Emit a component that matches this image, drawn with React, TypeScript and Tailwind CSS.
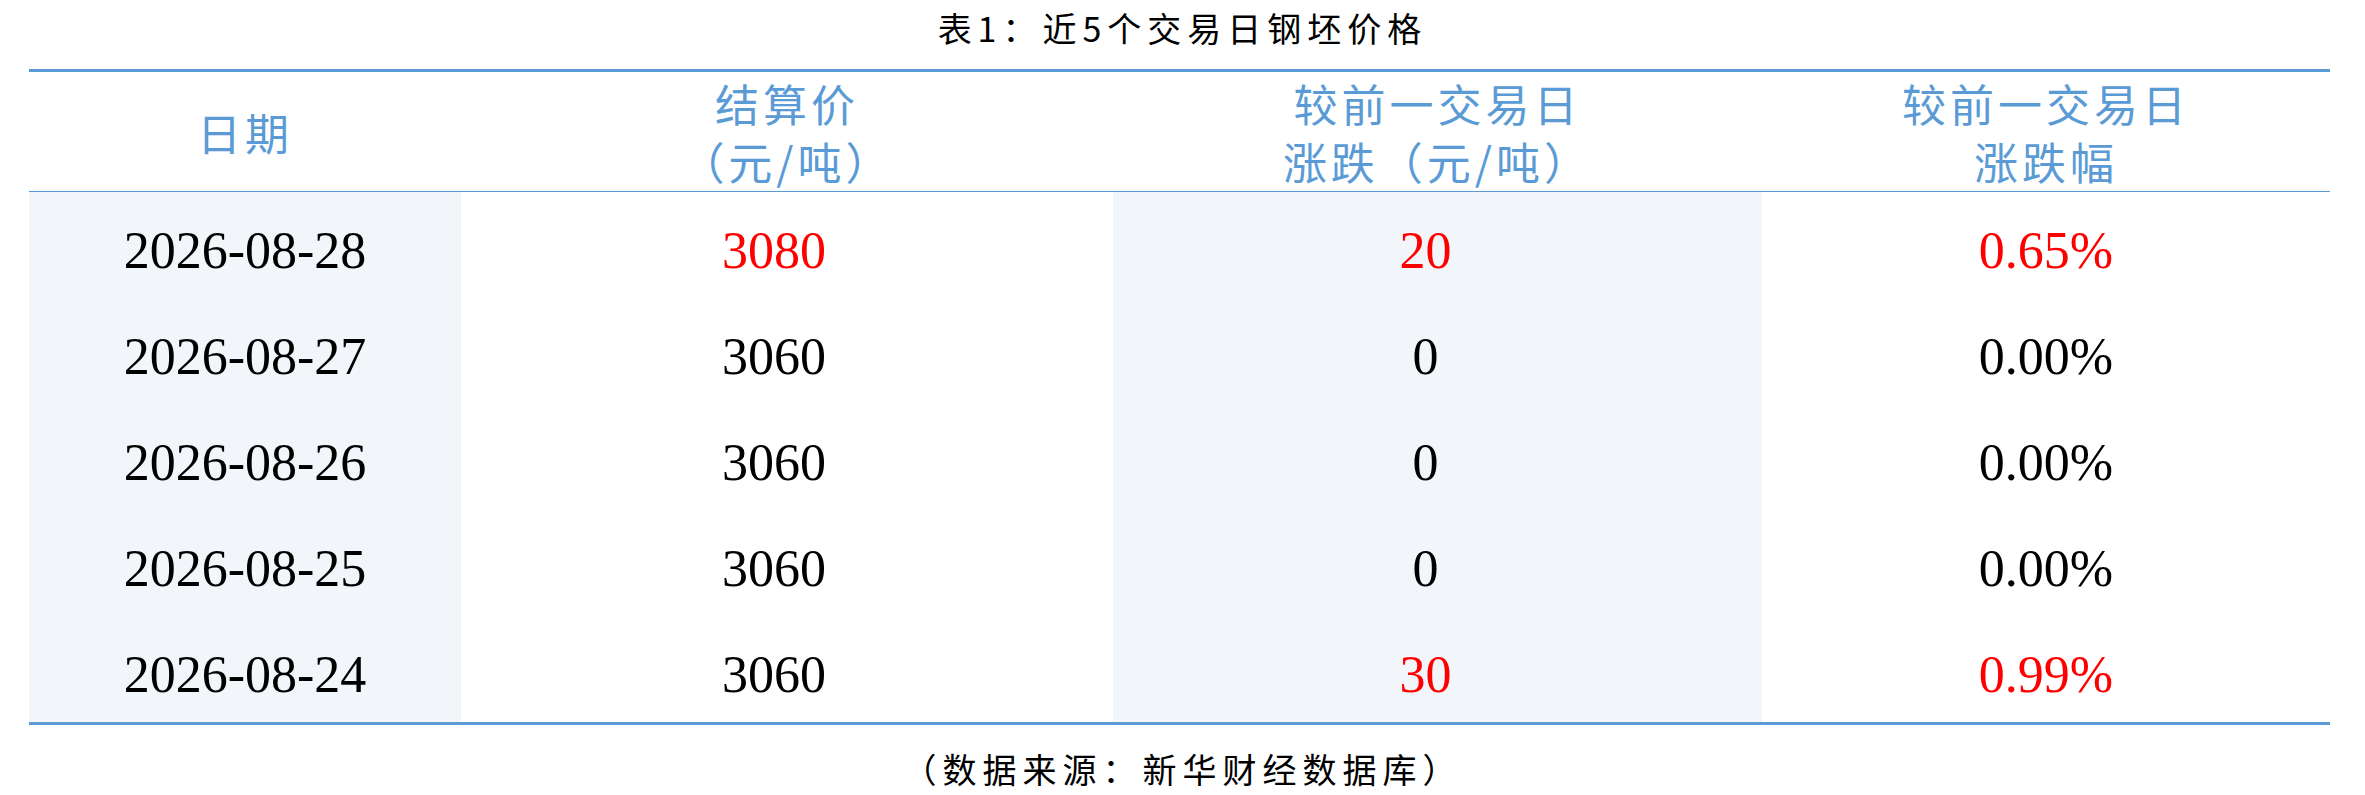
import React from "react";

type Row = {
  date: string;
  price: string;
  change: string;
  pct: string;
  up: boolean;
  priceUp: boolean;
};

const rows: Row[] = [
  { date: "2026-08-28", price: "3080", change: "20", pct: "0.65%", up: true, priceUp: true },
  { date: "2026-08-27", price: "3060", change: "0", pct: "0.00%", up: false, priceUp: false },
  { date: "2026-08-26", price: "3060", change: "0", pct: "0.00%", up: false, priceUp: false },
  { date: "2026-08-25", price: "3060", change: "0", pct: "0.00%", up: false, priceUp: false },
  { date: "2026-08-24", price: "3060", change: "30", pct: "0.99%", up: true, priceUp: false },
];

const cjk = "font-['Noto_Sans_CJK_SC',sans-serif]";
const num = "font-['Liberation_Serif','Noto_Sans_CJK_SC',serif] text-[52px]";
const cols = "grid grid-cols-[432px_652px_649px_568px]";

export default function App() {
  return (
    <div className="w-[2365px] h-[795px] bg-white overflow-hidden">
      <div
        className={`h-[69px] flex justify-center leading-[56px] text-[34px] tracking-[6px] text-black ${cjk}`}
      >
        表1：近5个交易日钢坯价格
      </div>

      <div className="ml-[29px] w-[2301px] border-t-[3px] border-b-[3px] border-[#5b9bd5]">
        {/* header */}
        <div
          className={`${cols} h-[120px] border-b-[1.5px] border-[#5b9bd5] text-[#5b9bd5] text-[44px] leading-[58px] tracking-[4px] ${cjk}`}
        >
          <div className="flex items-center justify-center">日期</div>
          <div className="flex flex-col items-center justify-center">
            <span>结算价</span>
            <span>（元/吨）</span>
          </div>
          <div className="flex flex-col items-center justify-center">
            <span>较前一交易日</span>
            <span>涨跌（元/吨）</span>
          </div>
          <div className="flex flex-col items-center justify-center">
            <span>较前一交易日</span>
            <span>涨跌幅</span>
          </div>
        </div>

        {/* body */}
        {rows.map((r) => (
          <div key={r.date} className={`${cols} h-[106px] ${num} text-black`}>
            <div className="flex items-center justify-center pt-[12px] bg-[#f2f5fa]">{r.date}</div>
            <div
              className={`flex items-center justify-center pt-[12px] pr-[26px] ${r.priceUp ? "text-[#ff0000]" : ""}`}
            >
              {r.price}
            </div>
            <div
              className={`flex items-center justify-center pt-[12px] pr-[24px] bg-[#f2f5fa] ${r.up ? "text-[#ff0000]" : ""}`}
            >
              {r.change}
            </div>
            <div
              className={`flex items-center justify-center pt-[12px] ${r.up ? "text-[#ff0000]" : ""}`}
            >
              {r.pct}
            </div>
          </div>
        ))}
      </div>

      <div
        className={`flex justify-center pt-[24px] text-[34px] leading-[40px] tracking-[6px] text-black ${cjk}`}
      >
        （数据来源：新华财经数据库）
      </div>
    </div>
  );
}
